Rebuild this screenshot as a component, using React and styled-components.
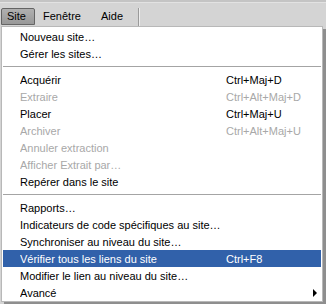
import React from "react";
import styled, { createGlobalStyle } from "styled-components";

const Global = createGlobalStyle`
  html, body { margin: 0; padding: 0; }
  body {
    background: #d4d4d4;
    font-family: "Liberation Sans", Arial, sans-serif;
    font-size: 11px;
    color: #000;
    width: 326px;
    height: 304px;
    overflow: hidden;
  }
`;

const Screen = styled.div`
  width: 326px;
  height: 304px;
  display: flex;
  flex-direction: column;
`;

const MenuBar = styled.div`
  height: 24px;
  border-top: 2px solid #c4c4c4;
  box-shadow: inset 0 1px 0 #e2e2e2;
  background: #d4d4d4;
  display: flex;
  align-items: flex-end;
  padding-left: 1px;
  gap: 2px;
`;

const BarItem = styled.div`
  box-sizing: border-box;
  width: ${(p) => p.$w}px;
  height: 17px;
  line-height: 15px;
  padding-left: ${(p) => p.$pl || 5}px;
  border: 1px solid ${(p) => (p.$active ? "#646464" : "transparent")};
  border-radius: 2px 2px 0 0;
  background: ${(p) =>
    p.$active ? "linear-gradient(#b0b0b0, #989898)" : "transparent"};
  margin-bottom: 1px;
`;

const BarDivider = styled.div`
  width: 1px;
  height: 18px;
  margin-left: ${(p) => p.$ml}px;
  background: #9a9a9a;
  box-shadow: 1px 0 0 #eeeeee;
`;

const Popup = styled.div`
  margin-left: 1px;
  border: 1px solid #b8b8b8;
  padding: 1px 1px 0 1px;
  background: #fff;
  box-shadow: 3px 3px 0 #8e8e8e;
  box-sizing: content-box;
  width: 318px;
`;

const Row = styled.div`
  display: grid;
  grid-template-columns: 206px 1fr 10px;
  align-items: center;
  height: 17px;
  padding: 0 2px 0 17px;
  background: ${(p) => (p.$selected ? "#3161aa" : "transparent")};
  color: ${(p) => (p.$selected ? "#fff" : p.$disabled ? "#a8a8a8" : "#000")};
  white-space: nowrap;
`;

const Label = styled.span`
  overflow: hidden;
`;

const Shortcut = styled.span``;

const Arrow = styled.span`
  justify-self: end;
  width: 0;
  height: 0;
  border-top: 4px solid transparent;
  border-bottom: 4px solid transparent;
  border-left: 4px solid #000;
  margin-right: 2px;
`;

const Separator = styled.div`
  height: 9px;
  display: flex;
  align-items: center;
  &::before {
    content: "";
    flex: 1;
    height: 1px;
    background: #a4a4a4;
  }
`;

const items = [
  { label: "Nouveau site…" },
  { label: "Gérer les sites…" },
  { sep: true },
  { label: "Acquérir", key: "Ctrl+Maj+D" },
  { label: "Extraire", key: "Ctrl+Alt+Maj+D", disabled: true },
  { label: "Placer", key: "Ctrl+Maj+U" },
  { label: "Archiver", key: "Ctrl+Alt+Maj+U", disabled: true },
  { label: "Annuler extraction", disabled: true },
  { label: "Afficher Extrait par…", disabled: true },
  { label: "Repérer dans le site" },
  { sep: true },
  { label: "Rapports…" },
  { label: "Indicateurs de code spécifiques au site…" },
  { label: "Synchroniser au niveau du site…" },
  { label: "Vérifier tous les liens du site", key: "Ctrl+F8", selected: true },
  { label: "Modifier le lien au niveau du site…" },
  { label: "Avancé", submenu: true },
];

export default function App() {
  return (
    <Screen>
      <Global />
      <MenuBar>
        <BarItem $active $w={34}>Site</BarItem>
        <BarItem $w={56}>Fenêtre</BarItem>
        <BarItem $w={36}>Aide</BarItem>
        <BarDivider $ml={5} />
      </MenuBar>
      <Popup>
        {items.map((it, i) =>
          it.sep ? (
            <Separator key={i} />
          ) : (
            <Row key={i} $disabled={it.disabled} $selected={it.selected}>
              <Label>{it.label}</Label>
              <Shortcut>{it.key || ""}</Shortcut>
              {it.submenu ? <Arrow /> : <span />}
            </Row>
          )
        )}
      </Popup>
    </Screen>
  );
}
